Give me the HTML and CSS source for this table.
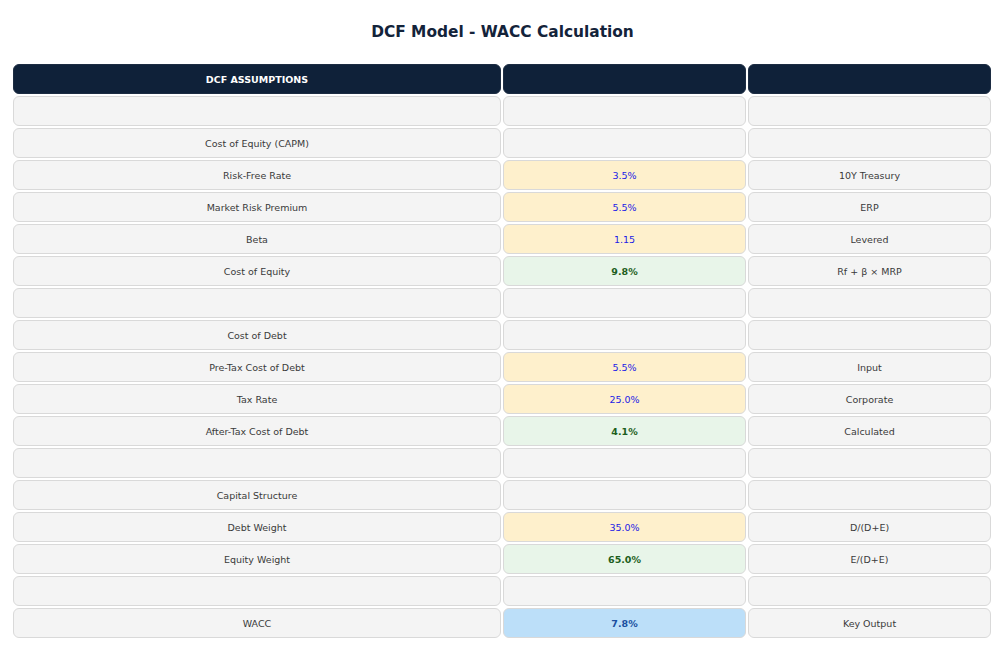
FILE: index.html
```html
<!DOCTYPE html>
<html>
<head>
<meta charset="utf-8">
<link rel="stylesheet" href="styles.css">
</head>
<body>
<h1 class="title">DCF Model - WACC Calculation</h1>
<div class="table">
  <div class="cell head">DCF ASSUMPTIONS</div><div class="cell head"></div><div class="cell head"></div>
  <div class="cell"></div><div class="cell"></div><div class="cell"></div>
  <div class="cell">Cost of Equity (CAPM)</div><div class="cell"></div><div class="cell"></div>
  <div class="cell">Risk-Free Rate</div><div class="cell input">3.5%</div><div class="cell">10Y Treasury</div>
  <div class="cell">Market Risk Premium</div><div class="cell input">5.5%</div><div class="cell">ERP</div>
  <div class="cell">Beta</div><div class="cell input">1.15</div><div class="cell">Levered</div>
  <div class="cell">Cost of Equity</div><div class="cell calc">9.8%</div><div class="cell">Rf + β × MRP</div>
  <div class="cell"></div><div class="cell"></div><div class="cell"></div>
  <div class="cell">Cost of Debt</div><div class="cell"></div><div class="cell"></div>
  <div class="cell">Pre-Tax Cost of Debt</div><div class="cell input">5.5%</div><div class="cell">Input</div>
  <div class="cell">Tax Rate</div><div class="cell input">25.0%</div><div class="cell">Corporate</div>
  <div class="cell">After-Tax Cost of Debt</div><div class="cell calc">4.1%</div><div class="cell">Calculated</div>
  <div class="cell"></div><div class="cell"></div><div class="cell"></div>
  <div class="cell">Capital Structure</div><div class="cell"></div><div class="cell"></div>
  <div class="cell">Debt Weight</div><div class="cell input">35.0%</div><div class="cell">D/(D+E)</div>
  <div class="cell">Equity Weight</div><div class="cell calc">65.0%</div><div class="cell">E/(D+E)</div>
  <div class="cell"></div><div class="cell"></div><div class="cell"></div>
  <div class="cell">WACC</div><div class="cell output">7.8%</div><div class="cell">Key Output</div>
</div>
</body>
</html>
```
FILE: styles.css
```css
html, body {
  margin: 0;
  padding: 0;
  background: #ffffff;
  font-family: "DejaVu Sans", "Liberation Sans", sans-serif;
}
.title {
  margin: 0;
  padding-top: 23px;
  height: 43px;
  box-sizing: border-box;
  text-align: center;
  font-size: 15.4px;
  font-weight: bold;
  line-height: 19px;
  color: #13233a;
}
.table {
  display: grid;
  grid-template-columns: 488px 243px 243px;
  grid-auto-rows: 30px;
  gap: 2px;
  margin: 21px 0 0 13px;
  width: 978px;
}
.cell {
  box-sizing: border-box;
  background: #f4f4f4;
  border: 1.5px solid #d9d9d9;
  border-radius: 6px;
  display: flex;
  align-items: center;
  justify-content: center;
  font-size: 9.5px;
  color: #3a3a3a;
}
.head {
  background: #0f2139;
  border-color: #1c2c42;
  color: #ffffff;
  font-weight: bold;
  font-size: 9.5px;
}
.input {
  background: #fef0cc;
  color: #2121e6;
}
.calc {
  background: #e8f5e9;
  color: #1d5e20;
  font-weight: bold;
}
.output {
  background: #bcdff9;
  color: #1a4fa0;
  font-weight: bold;
}
```
